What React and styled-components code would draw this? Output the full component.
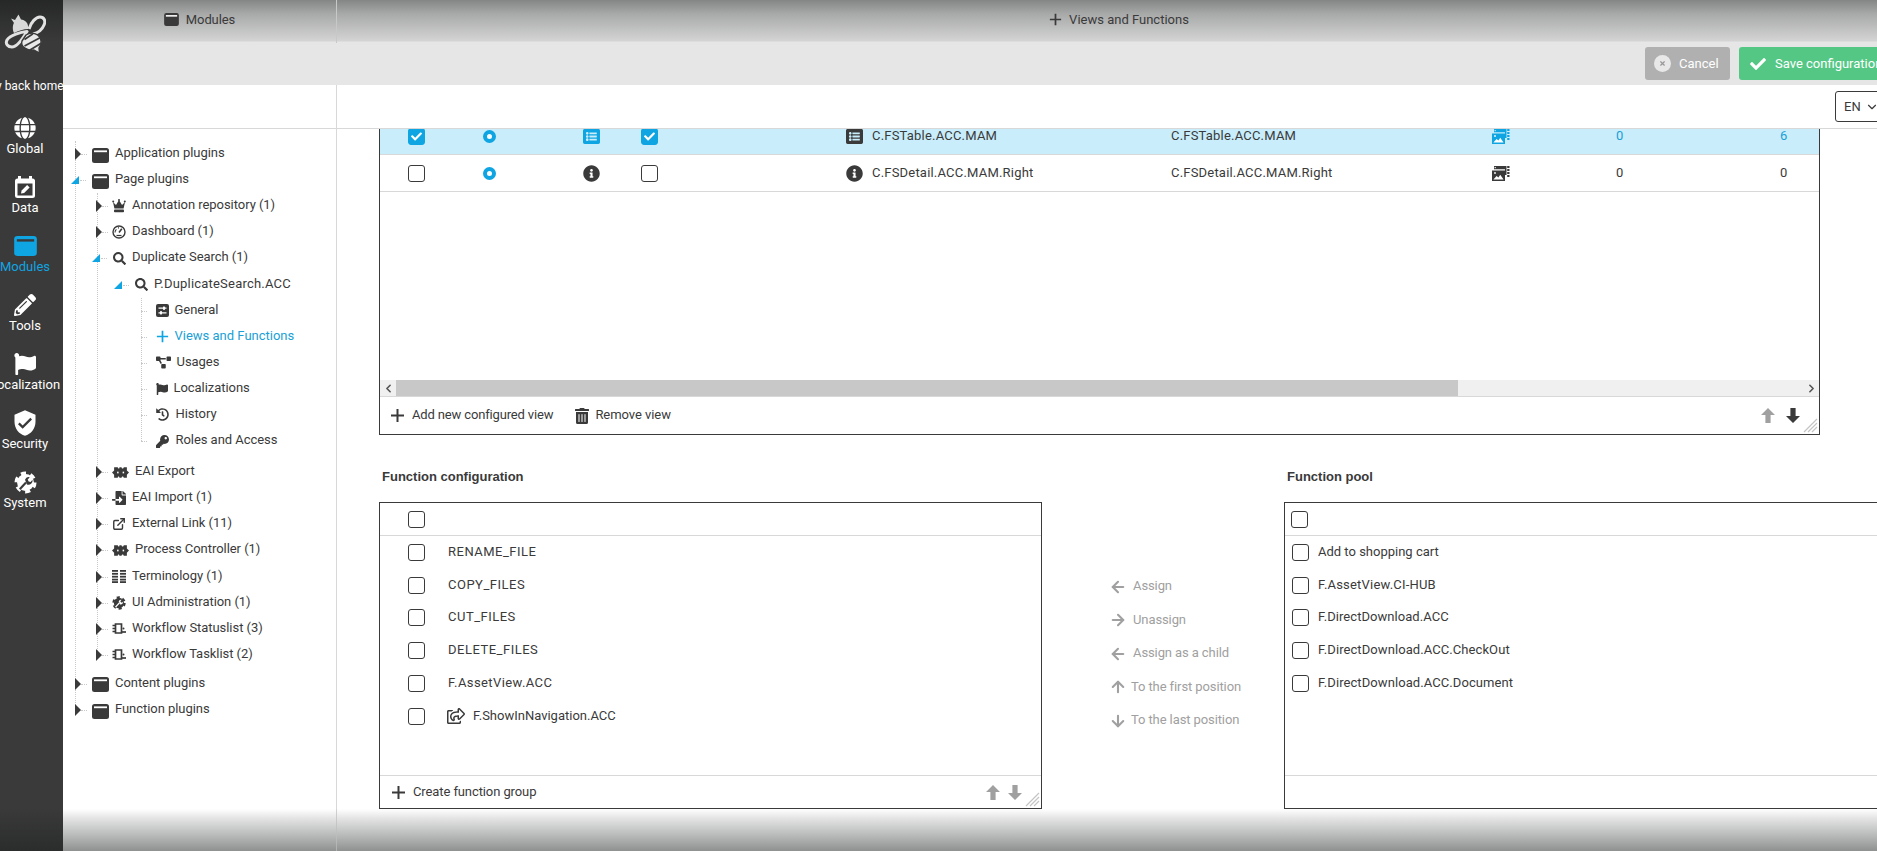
import React from "react";
import styled, { createGlobalStyle } from "styled-components";
import {
  FaGlobe, FaPencilAlt, FaFlag, FaSearch, FaProjectDiagram, FaHistory, FaKey,
  FaFileImport, FaTrashAlt, FaInfoCircle, FaListAlt, FaRegShareSquare, FaCheck, FaTimes,
} from "react-icons/fa";
import { MdVerifiedUser } from "react-icons/md";
import { LuExternalLink, LuArrowLeft, LuArrowRight, LuArrowUp, LuArrowDown, LuChevronDown, LuChevronLeft, LuChevronRight } from "react-icons/lu";

const ink = "#3a3a3a";
const blue = "#0fa5e2";

const Global = createGlobalStyle`
  html, body { margin: 0; padding: 0; height: 100%; overflow: hidden; }
  body { font-family: Roboto, "Liberation Sans", sans-serif; font-size: 13px; color: ${ink}; background: #fff; }
  * { box-sizing: border-box; }
`;

const Shell = styled.div`
  display: flex;
  width: 1877px;
  height: 851px;
  overflow: hidden;
`;

/* ---------- Sidebar ---------- */
const Sidebar = styled.nav`
  flex: 0 0 63px;
  width: 63px;
  display: flex;
  flex-direction: column;
  align-items: flex-start;
  overflow: hidden;
  color: #fff;
  background: linear-gradient(#262727 0, #3a3a3a 42px, #3a3a3a 808px, #2b2c2c 851px);
`;
const Logo = styled.div`
  height: 78px;
  width: 100%;
  padding: 13px 0 0 4px;
  svg { display: block; }
`;
const NavItem = styled.div`
  width: 50px;
  height: 59px;
  display: flex;
  flex-direction: column;
  align-items: center;
  color: ${(p) => (p.$active ? blue : "#fff")};
  svg { display: block; }
`;
const HomeLabel = styled.div`
  width: 50px;
  height: 38px;
  display: flex;
  justify-content: center;
  white-space: nowrap;
  font-size: 12px;
  line-height: 16px;
`;
const NavIcon = styled.div`
  height: 24px;
  width: 30px;
  flex: none;
  display: flex;
  align-items: center;
  justify-content: center;
`;
const NavLabel = styled.div`
  width: 50px;
  display: flex;
  justify-content: center;
  white-space: nowrap;
  font-size: 13px;
  line-height: 18px;
`;

/* ---------- Main frame ---------- */
const Main = styled.div`
  flex: 1;
  min-width: 0;
  display: flex;
  flex-direction: column;
  overflow: hidden;
`;
const TopBar = styled.header`
  flex: 0 0 43px;
  width: 1838px;
  display: grid;
  grid-template-columns: 274px 1564px;
  background: linear-gradient(#848686 0, #a8a9a9 14px, #d4d4d4 41px, #e6e6e6 42px);
`;
const TopCell = styled.div`
  display: flex;
  align-items: center;
  justify-content: center;
  gap: 7px;
  padding-bottom: 5px;
  font-size: 13px;
  letter-spacing: ${(p) => (p.$divider ? "-0.1px" : "0")};
  border-right: ${(p) => (p.$divider ? "1px solid #c8c8c8" : "0")};
`;
const ToolBar = styled.div`
  flex: 0 0 42px;
  width: 1838px;
  display: flex;
  justify-content: flex-end;
  align-items: flex-start;
  gap: 9px;
  padding-top: 4px;
  background: #e6e6e6;
`;
const ActionButton = styled.button`
  height: 33px;
  width: ${(p) => p.$w}px;
  border: 0;
  border-radius: 3px;
  padding: 0 0 0 ${(p) => p.$pad}px;
  display: flex;
  align-items: center;
  gap: ${(p) => p.$gap}px;
  color: #fff;
  font: 13px Roboto, sans-serif;
  background: ${(p) => p.$bg};
`;
const CancelDot = styled.span`
  width: 17px;
  height: 17px;
  border-radius: 50%;
  background: #e8e8e8;
  color: #9a9a9a;
  display: flex;
  align-items: center;
  justify-content: center;
`;
const SubHeader = styled.div`
  flex: 0 0 44px;
  width: 1838px;
  display: grid;
  grid-template-columns: 274px 1564px;
  border-bottom: 1px solid #d8d8d8;
  background: #fff;
`;
const SubLeft = styled.div`
  border-right: 1px solid #d8d8d8;
`;
const SubRight = styled.div`
  display: flex;
  justify-content: flex-end;
  align-items: flex-start;
  padding-top: 6px;
`;
const LangSelect = styled.div`
  width: 66px;
  height: 31px;
  border: 1px solid ${ink};
  border-radius: 3px;
  display: flex;
  align-items: center;
  gap: 4px;
  padding-left: 8px;
  font-size: 13px;
`;
const Body = styled.div`
  flex: 1;
  min-height: 0;
  width: 1838px;
  display: grid;
  grid-template-columns: 274px 1564px;
  overflow: hidden;
`;
const BottomBar = styled.footer`
  flex: 0 0 42px;
  width: 1838px;
  display: grid;
  grid-template-columns: 274px 1564px;
  background: linear-gradient(#ffffff 0, #e2e2e2 10px, #b4b5b5 28px, #8f9191 42px);
`;
const BottomCell = styled.div`
  border-right: 1px solid rgba(190, 190, 190, 0.7);
`;

/* ---------- Tree ---------- */
const TreePane = styled.aside`
  border-right: 1px solid #d8d8d8;
  padding-top: 12px;
  overflow: hidden;
  position: relative;
`;
const Group = styled.div`
  position: relative;
  margin-bottom: ${(p) => p.$after || 0}px;
  &::before {
    content: "";
    position: absolute;
    left: ${(p) => p.$line}px;
    top: ${(p) => p.$top || 0}px;
    bottom: ${(p) => p.$bottom || 13}px;
    border-left: 1px dotted #c9c9c9;
  }
`;
const Row = styled.div`
  position: relative;
  height: 26.1px;
  display: flex;
  align-items: center;
  padding-left: ${(p) => (p.$level === 0 ? 8 : 7 + p.$level * 22 - (p.$level === 3 ? 0.5 : 0))}px;
  color: ${(p) => (p.$active ? "#1a9fd6" : ink)};
  white-space: nowrap;
`;
const ArrowSlot = styled.span`
  flex: 0 0 20px;
  width: 20px;
  height: 12px;
  display: flex;
  align-items: center;
  position: relative;
  &::after {
    content: "";
    position: absolute;
    left: ${(p) => (p.$kind === "open" ? "9px" : p.$kind === "leaf" ? "5px" : "10px")};
    width: 6px;
    top: 6px;
    border-top: 1px dotted #c9c9c9;
  }
`;
const Closed = styled.i`
  display: block;
  margin-left: 4px;
  width: 0;
  height: 0;
  border-style: solid;
  border-width: 6px 0 6px 6px;
  border-color: transparent transparent transparent ${ink};
`;
const Open = styled.i`
  display: block;
  width: 0;
  height: 0;
  border-style: solid;
  border-width: 0 0 8px 8px;
  border-color: transparent transparent ${blue} transparent;
`;
const TreeIcon = styled.span`
  display: flex;
  align-items: center;
  justify-content: center;
  width: ${(p) => p.$w}px;
  height: 16px;
  margin-right: 6px;
  flex: none;
  transform: translateY(${(p) => (p.$level === 0 ? 1 : 0)}px);
`;
const TreeLabel = styled.span`
  font-size: 13px;
  line-height: 16px;
  letter-spacing: ${(p) => p.$ls}px;
  transform: translateY(-1px);
`;

/* ---------- Content ---------- */
const ContentPane = styled.main`
  padding-left: 42px;
  overflow: hidden;
  min-height: 0;
`;
const ScrollOffset = styled.div`
  margin-top: -12px;
`;
const ViewBox = styled.section`
  position: relative;
  width: 1441px;
  height: 318px;
  border: 1px solid ${ink};
  display: flex;
  flex-direction: column;
`;
const ViewRow = styled.div`
  height: 37px;
  flex: none;
  display: grid;
  grid-template-columns: 75px 100px 58px 205px 325px 321px 124px 164px 60px;
  align-items: center;
  padding-left: 28px;
  border-bottom: 1px solid #d8d8d8;
  background: ${(p) => (p.$selected ? "#c9edfa" : "#fff")};
  color: ${(p) => (p.$selected ? "#1a9fd6" : ink)};
  font-size: 13px;
`;
const NameCell = styled.div`
  display: flex;
  align-items: center;
  gap: 9px;
  color: ${ink};
  letter-spacing: 0.2px;
  span { transform: translateY(-1px); }
`;
const IdCell = styled.div`
  color: ${ink};
  letter-spacing: 0.2px;
  transform: translateY(-1px);
`;
const NumCell = styled.div`
  transform: translateY(-1px);
`;
const CheckBox = styled.span`
  width: 17px;
  height: 17px;
  display: flex;
  align-items: center;
  justify-content: center;
  border-radius: 3px;
  flex: none;
  color: #fff;
  background: ${(p) => (p.$checked ? blue : "#fff")};
  border: 1px solid ${(p) => (p.$checked ? blue : ink)};
`;
const Radio = styled.span`
  width: 13px;
  height: 13px;
  border-radius: 50%;
  border: 4px solid ${blue};
  background: #fff;
`;
const Spacer = styled.div`
  flex: 1;
`;
const HScroll = styled.div`
  flex: 0 0 17px;
  display: flex;
  align-items: center;
  background: #f0f0f0;
  border-bottom: 1px solid #d8d8d8;
`;
const ScrollArrow = styled.span`
  flex: 0 0 16px;
  display: flex;
  justify-content: center;
  color: #555;
`;
const ScrollTrack = styled.div`
  flex: 1;
  height: 16px;
`;
const ScrollThumb = styled.div`
  height: 100%;
  width: 1062px;
  background: #c8c8c8;
`;
const BoxFooter = styled.div`
  flex: 0 0 ${(p) => p.$h}px;
  display: flex;
  align-items: center;
  padding: 0 ${(p) => p.$right}px 0 ${(p) => p.$pad}px;
  font-size: 13px;
  border-top: ${(p) => (p.$line ? "1px solid #d8d8d8" : "0")};
`;
const FootAction = styled.span`
  display: inline-flex;
  align-items: center;
  gap: ${(p) => p.$gap || 7}px;
  margin-right: ${(p) => p.$mr || 0}px;
  letter-spacing: ${(p) => p.$ls || 0}px;
  span { transform: translateY(-1px); }
`;
const MoveArrows = styled.div`
  margin-left: auto;
  display: flex;
  gap: ${(p) => p.$gap}px;
  align-items: center;
`;
const Grip = styled.svg`
  position: absolute;
  right: 1px;
  bottom: 1px;
`;
const SectionRow = styled.div`
  display: flex;
  align-items: flex-start;
  width: 1564px;
  margin-top: 34px;
`;
const FuncColumn = styled.div`
  flex: none;
  width: ${(p) => p.$w}px;
`;
const SectionTitle = styled.h3`
  margin: 0 0 17px;
  padding-left: 3px;
  font-family: "Liberation Sans", Arial, sans-serif;
  font-size: 13px;
  line-height: 16px;
  font-weight: 700;
`;
const FuncBox = styled.section`
  position: relative;
  height: 307px;
  border: 1px solid ${ink};
  display: flex;
  flex-direction: column;
`;
const FuncHead = styled.div`
  flex: 0 0 33px;
  display: flex;
  align-items: center;
  padding-left: ${(p) => p.$pad}px;
  border-bottom: 1px solid #d8d8d8;
`;
const FuncList = styled.div`
  flex: 1;
`;
const FuncRow = styled.div`
  height: 32.8px;
  display: flex;
  align-items: center;
  padding-left: ${(p) => p.$pad}px;
  gap: ${(p) => p.$gap}px;
  font-size: 13px;
`;
const FuncLabel = styled.span`
  letter-spacing: ${(p) => p.$ls || 0}px;
  margin-left: ${(p) => p.$ml || 0}px;
  transform: translateY(-1px);
`;
const MidColumn = styled.div`
  flex: none;
  width: 175px;
  margin-left: 67px;
  padding-top: 101px;
  color: #a0a0a0;
  font-size: 13px;
  letter-spacing: -0.1px;
`;
const MidRow = styled.div`
  height: 33.5px;
  display: flex;
  align-items: center;
  gap: ${(p) => p.$gap}px;
  white-space: nowrap;
  span { transform: translateY(-1px); }
`;

/* ---------- Drawn icons ---------- */
const WindowIcon = ({ w = 17, h = 15, color = ink, bar = "#fff" }) => (
  <svg width={w} height={h} viewBox="0 0 17 15">
    <rect x="0" y="0" width="17" height="15" rx="2.5" fill={color} />
    <rect x="2" y="2.4" width="13" height="1.8" fill={bar} />
  </svg>
);
const PlusIcon = ({ size = 15, color = "currentColor", sw = 2 }) => (
  <svg width={size} height={size} viewBox="0 0 15 15">
    <path d="M7.5 1v13M1 7.5h13" stroke={color} strokeWidth={sw} fill="none" />
  </svg>
);
const BeeLogo = () => (
  <svg width="42" height="42" viewBox="0 0 42 42" fill="none" stroke="#e2e2e2" strokeLinejoin="round">
    <path d="M7 5.5L11 7L14.5 1.5L17 6.5C21 7 24 10 24 13V16C20 16 14 18 10 20C8 16 9 11 10 10Z" fill="#d8d8d8" stroke="none" />
    <path d="M23 18.5C17 19 6 22 3 27C1 31 4 34 8 34C13 34 18 27 23 18.5Z" strokeWidth="3" />
    <path d="M25 16C27 9 32 4 36 4C40 4 42 8 40 12C38 17 33 20 29 21" strokeWidth="3" />
    <path d="M22 22C28 18 36 21 37 28C38 31 36 33 35 35L35.5 40L30 37C24 38 16 34 18 28Z" fill="#e8e8e8" stroke="#3a3a3a" strokeWidth="1.4" />
    <path d="M20.5 26.5L29 20.8M20.5 33L36.5 24.5M26 37L37.5 30" stroke="#3a3a3a" strokeWidth="1.7" />
  </svg>
);
const CalendarIcon = () => (
  <svg width="20" height="22" viewBox="0 0 20 22">
    <rect x="0" y="2.5" width="20" height="19.5" rx="2.5" fill="#fff" />
    <rect x="3" y="0" width="3" height="4" fill="#fff" />
    <rect x="14" y="0" width="3" height="4" fill="#fff" />
    <rect x="2.5" y="7.5" width="15" height="12" fill="#3a3a3a" />
    <path d="M6 17.5l.6-3 5.5-5.5 2.5 2.5-5.5 5.5z" fill="#fff" />
  </svg>
);
const GearWrench = ({ size = 23, fg = "#fff", bg = "#3a3a3a" }) => (
  <svg width={size} height={size} viewBox="0 0 24 24">
    <circle cx="12" cy="12" r="8.8" fill={fg} />
    <circle cx="12" cy="12" r="9.8" fill="none" stroke={fg} strokeWidth="3.4" strokeDasharray="5.4 4.86" />
    <path d="M6 19L12.5 12" stroke={bg} strokeWidth="2.2" />
    <path d="M11.5 9a4 4 0 0 1 5-2.4l-2.2 2.3 1 2 2 .5 2-2.2a4.2 4.2 0 0 1-5.8 4.8z" fill={bg} />
  </svg>
);
const CrownIcon = () => (
  <svg width="14" height="14" viewBox="0 0 14 14" fill={ink}>
    <path d="M1 3l3 3 3-5 3 5 3-3-1.4 6.4H2.4z" />
    <circle cx="1.2" cy="2.4" r="1" />
    <circle cx="7" cy="1" r="1" />
    <circle cx="12.8" cy="2.4" r="1" />
    <rect x="2" y="10.6" width="10" height="2.6" rx="0.8" />
  </svg>
);
const GaugeIcon = () => (
  <svg width="14" height="14" viewBox="0 0 14 14" fill="none" stroke={ink}>
    <circle cx="7" cy="7" r="6" strokeWidth="1.4" />
    <path d="M7 7.5L9.8 3.8" strokeWidth="1.6" />
    <path d="M3 7.4a4 4 0 0 1 1.4-3M6 2.9h1" strokeWidth="1.1" />
    <path d="M4.5 10.5h5" strokeWidth="1.2" />
  </svg>
);
const SliderSquare = () => (
  <svg width="13" height="13" viewBox="0 0 13 13">
    <rect width="13" height="13" rx="2" fill={ink} />
    <path d="M2.5 4.2h8M2.5 8.8h8" stroke="#fff" strokeWidth="1.3" />
    <rect x="7" y="2.6" width="2" height="3.2" fill="#fff" />
    <rect x="4" y="7.2" width="2" height="3.2" fill="#fff" />
  </svg>
);
const Puzzle = () => (
  <svg width="17" height="13" viewBox="0 0 16 12">
    <path d="M0 6l2-2V1h3.5c0 1 .6 1.2 1 1.2S7 2 7 1h2c0 1 .6 1.2 1 1.2s1-.2 1-1.2h3v3l2 2-2 2v3h-3c0-1-.6-1.2-1-1.2s-1 .2-1 1.2H7c0-1-.6-1.2-1-1.2s-.5.2-.5 1.2H2V8z" fill={ink} />
    <rect x="4.8" y="5.2" width="1.4" height="1.6" fill="#fff" />
    <rect x="10" y="5.2" width="1.4" height="1.6" fill="#fff" />
  </svg>
);
const TermIcon = () => (
  <svg width="14" height="13" viewBox="0 0 14 13" fill={ink}>
    {[0, 2.9, 5.8, 8.7, 11.2].map((y) => (
      <React.Fragment key={y}>
        <rect x="0" y={y} width="6" height="1.8" />
        <rect x="8" y={y} width="6" height="1.8" />
      </React.Fragment>
    ))}
  </svg>
);
const WorkflowIcon = () => (
  <svg width="14" height="13" viewBox="0 0 14 13" fill="none" stroke={ink}>
    <path d="M3.5 2h6v9h-6z" strokeWidth="1.7" />
    <path d="M0.5 3.5h3M0.5 6.5h3M0.5 9.5h3" strokeWidth="1.5" />
    <path d="M9 10h5" strokeWidth="1.7" />
    <circle cx="11.5" cy="6.5" r="1" fill={ink} stroke="none" />
  </svg>
);
const MediaIcon = ({ color, cut }) => (
  <svg width="18" height="15" viewBox="0 0 18 15">
    <path d="M2 0h12.5v9H13V3.2H2z" fill={color} />
    <rect x="2.6" y="1" width="1.2" height="1.2" fill={cut} />
    <rect x="15.2" y="0" width="2.3" height="2" fill={color} />
    <rect x="15.2" y="3" width="2.3" height="2" fill={color} />
    <rect x="15.2" y="6" width="2.3" height="2" fill={color} />
    <rect x="15.2" y="9" width="2.3" height="2" fill={color} />
    <rect x="0" y="4.5" width="13" height="10.5" fill={color} />
    <path d="M1.4 13.6l3.2-3.6 1.8 1.6 1.8-2.8 3.4 4.8z" fill="#fff" />
    <circle cx="3" cy="7" r="0.9" fill="#fff" />
  </svg>
);
const BlockArrow = ({ dir, color }) => (
  <svg width="14" height="15" viewBox="0 0 14 15" style={dir === "down" ? { transform: "rotate(180deg)" } : undefined}>
    <path d="M7 0l7 7H9.6v8H4.4V7H0z" fill={color} />
  </svg>
);
const GripIcon = () => (
  <Grip width="15" height="15" viewBox="0 0 15 15">
    <path d="M14 1L1 14M14 5L5 14M14 9l-5 5" stroke="#c4c4c4" strokeWidth="1.2" fill="none" />
  </Grip>
);

/* ---------- Data ---------- */
const nav = [
  { label: "Global", icon: <FaGlobe size={22} /> },
  { label: "Data", icon: <CalendarIcon /> },
  { label: "Modules", active: true, icon: <WindowIcon w={23} h={20} color={blue} bar="#3a3a3a" /> },
  { label: "Tools", icon: <FaPencilAlt size={22} /> },
  { label: "Localization", icon: <FaFlag size={22} /> },
  { label: "Security", icon: <MdVerifiedUser size={28} /> },
  { label: "System", icon: <GearWrench /> },
];
const win = <WindowIcon />;
const funcsLeft = [
  ["RENAME_FILE", 0.5], ["COPY_FILES", 0.5], ["CUT_FILES", 0.5], ["DELETE_FILES", 0.5], ["F.AssetView.ACC", 0.4],
];
const funcsRight = [
  ["Add to shopping cart", 0], ["F.AssetView.CI-HUB", 0.2], ["F.DirectDownload.ACC", 0.05],
  ["F.DirectDownload.ACC.CheckOut", 0.08], ["F.DirectDownload.ACC.Document", 0.08],
];
const mid = [
  { t: "Assign", i: <LuArrowLeft size={18} strokeWidth={2.8} />, g: 6 },
  { t: "Unassign", i: <LuArrowRight size={18} strokeWidth={2.8} />, g: 6 },
  { t: "Assign as a child", i: <LuArrowLeft size={18} strokeWidth={2.8} />, g: 6 },
  { t: "To the first position", i: <LuArrowUp size={18} strokeWidth={2.8} />, g: 4 },
  { t: "To the last position", i: <LuArrowDown size={18} strokeWidth={2.8} />, g: 4 },
];

const TreeRow = ({ level, state, icon, w = 14, children, active, ls = -0.05 }) => (
  <Row $level={level} $active={active}>
    <ArrowSlot $kind={state || "leaf"}>
      {state === "closed" && <Closed />}
      {state === "open" && <Open />}
    </ArrowSlot>
    <TreeIcon $w={w} $level={level}>{icon}</TreeIcon>
    <TreeLabel $ls={ls}>{children}</TreeLabel>
  </Row>
);

const Tick = () => <FaCheck size={11} />;

export default function App() {
  return (
    <Shell>
      <Global />
      <Sidebar>
        <Logo><BeeLogo /></Logo>
        <HomeLabel>Fly back home</HomeLabel>
        {nav.map((n) => (
          <NavItem key={n.label} $active={n.active}>
            <NavIcon>{n.icon}</NavIcon>
            <NavLabel>{n.label}</NavLabel>
          </NavItem>
        ))}
      </Sidebar>
      <Main>
        <TopBar>
          <TopCell $divider><WindowIcon w={15} h={13} /> Modules</TopCell>
          <TopCell><PlusIcon size={13} color={ink} /> Views and Functions</TopCell>
        </TopBar>
        <ToolBar>
          <ActionButton $w={85} $bg="#b0b0b0" $pad={9} $gap={8}>
            <CancelDot><FaTimes size={7} /></CancelDot>Cancel
          </ActionButton>
          <ActionButton $w={162} $bg="#55c785" $pad={11} $gap={9}>
            <FaCheck size={16} />Save configuration
          </ActionButton>
        </ToolBar>
        <SubHeader>
          <SubLeft />
          <SubRight>
            <LangSelect>EN <LuChevronDown size={14} /></LangSelect>
          </SubRight>
        </SubHeader>
        <Body>
          <TreePane>
            <Group $line={12} $top={0} $bottom={14}>
              <TreeRow level={0} state="closed" w={18} icon={win}>Application plugins</TreeRow>
              <TreeRow level={0} state="open" w={18} icon={win}>Page plugins</TreeRow>
              <Group $line={34} $top={0} $bottom={13} $after={3}>
                <TreeRow level={1} state="closed" icon={<CrownIcon />}>Annotation repository (1)</TreeRow>
                <TreeRow level={1} state="closed" icon={<GaugeIcon />}>Dashboard (1)</TreeRow>
                <TreeRow level={1} state="open" icon={<FaSearch size={13} color={ink} />}>Duplicate Search (1)</TreeRow>
                <TreeRow level={2} state="open" ls={0.2} icon={<FaSearch size={13} color={ink} />}>P.DuplicateSearch.ACC</TreeRow>
                <Group $line={78} $top={0} $bottom={13} $after={5}>
                  <TreeRow level={3} w={13} icon={<SliderSquare />}>General</TreeRow>
                  <TreeRow level={3} w={13} active ls={0} icon={<PlusIcon size={13} color={blue} />}>Views and Functions</TreeRow>
                  <TreeRow level={3} w={15} icon={<FaProjectDiagram size={15} color={ink} />}>Usages</TreeRow>
                  <TreeRow level={3} w={12} icon={<FaFlag size={12} color={ink} />}>Localizations</TreeRow>
                  <TreeRow level={3} w={14} icon={<FaHistory size={13} color={ink} />}>History</TreeRow>
                  <TreeRow level={3} w={14} icon={<FaKey size={13} color={ink} />}>Roles and Access</TreeRow>
                </Group>
                <TreeRow level={1} state="closed" w={17} icon={<Puzzle />}>EAI Export</TreeRow>
                <TreeRow level={1} state="closed" icon={<FaFileImport size={14} color={ink} />}>EAI Import (1)</TreeRow>
                <TreeRow level={1} state="closed" icon={<LuExternalLink size={14} color={ink} strokeWidth={2.4} />}>External Link (11)</TreeRow>
                <TreeRow level={1} state="closed" w={17} icon={<Puzzle />}>Process Controller (1)</TreeRow>
                <TreeRow level={1} state="closed" icon={<TermIcon />}>Terminology (1)</TreeRow>
                <TreeRow level={1} state="closed" icon={<GearWrench size={14} fg={ink} bg="#fff" />}>UI Administration (1)</TreeRow>
                <TreeRow level={1} state="closed" icon={<WorkflowIcon />}>Workflow Statuslist (3)</TreeRow>
                <TreeRow level={1} state="closed" icon={<WorkflowIcon />}>Workflow Tasklist (2)</TreeRow>
              </Group>
              <TreeRow level={0} state="closed" w={18} icon={win}>Content plugins</TreeRow>
              <TreeRow level={0} state="closed" w={18} icon={win}>Function plugins</TreeRow>
            </Group>
          </TreePane>
          <ContentPane>
            <ScrollOffset>
              <ViewBox>
                <ViewRow $selected>
                  <CheckBox $checked><Tick /></CheckBox>
                  <Radio />
                  <FaListAlt size={17} color={blue} />
                  <CheckBox $checked><Tick /></CheckBox>
                  <NameCell><FaListAlt size={17} color={ink} /><span>C.FSTable.ACC.MAM</span></NameCell>
                  <IdCell>C.FSTable.ACC.MAM</IdCell>
                  <MediaIcon color={blue} cut="#c9edfa" />
                  <NumCell>0</NumCell>
                  <NumCell>6</NumCell>
                </ViewRow>
                <ViewRow>
                  <CheckBox />
                  <Radio />
                  <FaInfoCircle size={17} color={ink} />
                  <CheckBox />
                  <NameCell><FaInfoCircle size={17} color={ink} /><span>C.FSDetail.ACC.MAM.Right</span></NameCell>
                  <IdCell>C.FSDetail.ACC.MAM.Right</IdCell>
                  <MediaIcon color={ink} cut="#fff" />
                  <NumCell>0</NumCell>
                  <NumCell>0</NumCell>
                </ViewRow>
                <Spacer />
                <HScroll>
                  <ScrollArrow><LuChevronLeft size={13} strokeWidth={3} /></ScrollArrow>
                  <ScrollTrack><ScrollThumb /></ScrollTrack>
                  <ScrollArrow><LuChevronRight size={13} strokeWidth={3} /></ScrollArrow>
                </HScroll>
                <BoxFooter $h={37} $pad={10} $right={19}>
                  <FootAction $mr={21} $ls={-0.15}><PlusIcon size={15} color={ink} /><span>Add new configured view</span></FootAction>
                  <FootAction $gap={5} $ls={-0.05}><FaTrashAlt size={16} color={ink} /><span>Remove view</span></FootAction>
                  <MoveArrows $gap={11}>
                    <BlockArrow dir="up" color="#a0a0a0" />
                    <BlockArrow dir="down" color={ink} />
                  </MoveArrows>
                </BoxFooter>
                <GripIcon />
              </ViewBox>
              <SectionRow>
                <FuncColumn $w={663}>
                  <SectionTitle>Function configuration</SectionTitle>
                  <FuncBox>
                    <FuncHead $pad={28}><CheckBox /></FuncHead>
                    <FuncList>
                      {funcsLeft.map(([f, ls]) => (
                        <FuncRow key={f} $pad={28} $gap={23}>
                          <CheckBox /><FuncLabel $ls={ls}>{f}</FuncLabel>
                        </FuncRow>
                      ))}
                      <FuncRow $pad={28} $gap={22}>
                        <CheckBox />
                        <FaRegShareSquare size={18} color={ink} />
                        <FuncLabel $ml={-14}>F.ShowInNavigation.ACC</FuncLabel>
                      </FuncRow>
                    </FuncList>
                    <BoxFooter $h={33} $pad={11} $right={19} $line>
                      <FootAction $ls={-0.1}><PlusIcon size={15} color={ink} /><span>Create function group</span></FootAction>
                      <MoveArrows $gap={8}>
                        <BlockArrow dir="up" color="#a0a0a0" />
                        <BlockArrow dir="down" color="#a0a0a0" />
                      </MoveArrows>
                    </BoxFooter>
                    <GripIcon />
                  </FuncBox>
                </FuncColumn>
                <MidColumn>
                  {mid.map((m) => (
                    <MidRow key={m.t} $gap={m.g}>{m.i}<span>{m.t}</span></MidRow>
                  ))}
                </MidColumn>
                <FuncColumn $w={640}>
                  <SectionTitle>Function pool</SectionTitle>
                  <FuncBox>
                    <FuncHead $pad={6}><CheckBox /></FuncHead>
                    <FuncList>
                      {funcsRight.map(([f, ls]) => (
                        <FuncRow key={f} $pad={7} $gap={9}>
                          <CheckBox /><FuncLabel $ls={ls}>{f}</FuncLabel>
                        </FuncRow>
                      ))}
                    </FuncList>
                    <BoxFooter $h={33} $pad={11} $right={19} $line />
                  </FuncBox>
                </FuncColumn>
              </SectionRow>
            </ScrollOffset>
          </ContentPane>
        </Body>
        <BottomBar>
          <BottomCell />
          <div />
        </BottomBar>
      </Main>
    </Shell>
  );
}
